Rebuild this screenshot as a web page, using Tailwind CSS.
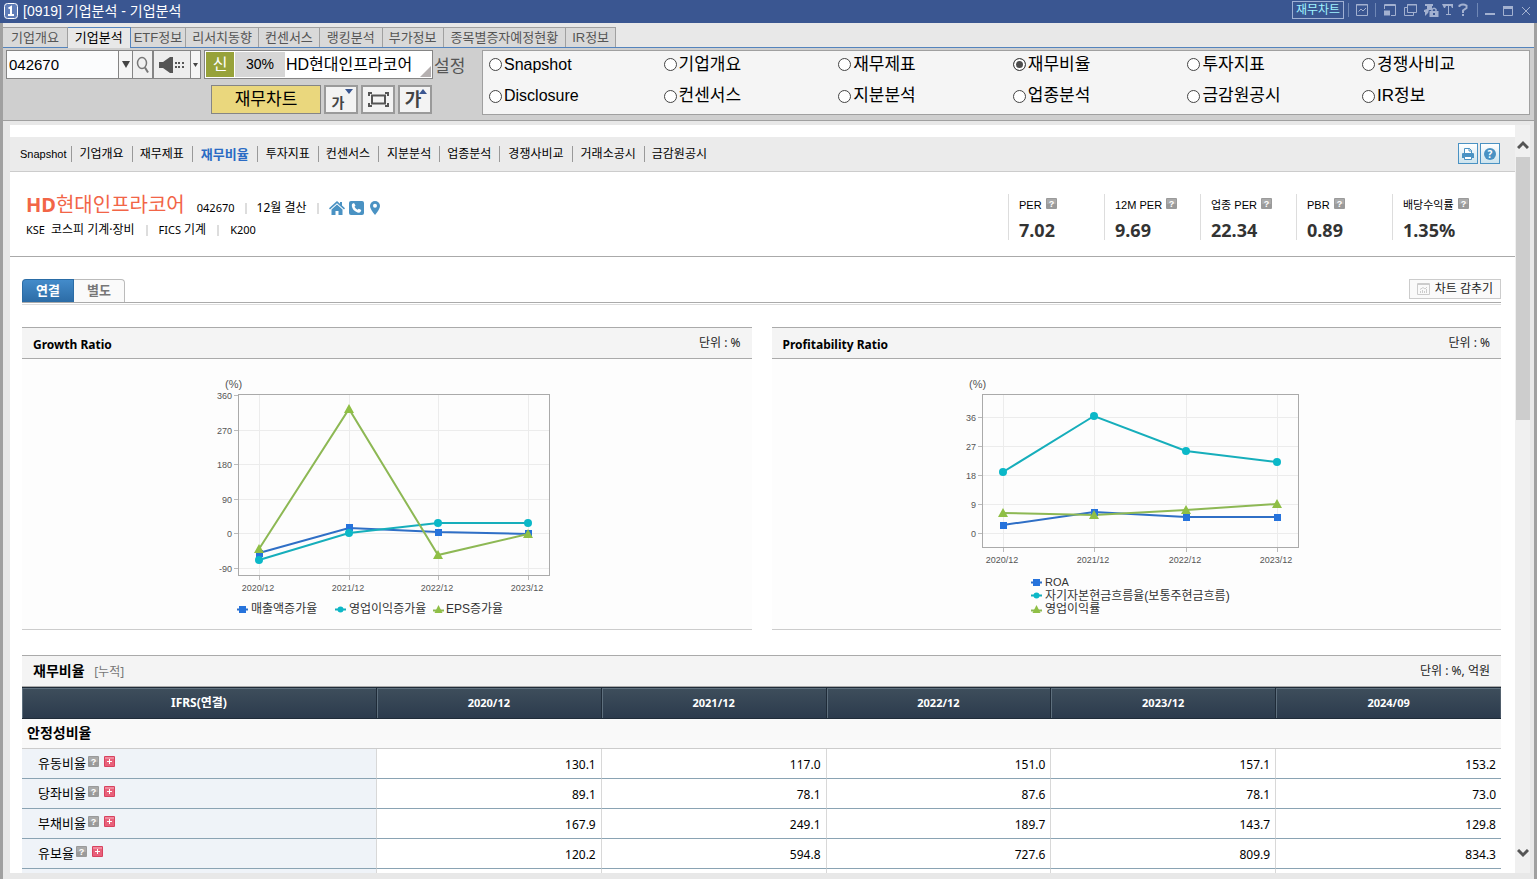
<!DOCTYPE html>
<html lang="ko">
<head>
    <meta charset="UTF-8">
    <meta name="viewport" content="width=device-width, initial-scale=1.0">
    <title>[0919] 기업분석 - 기업분석</title>
    <script src="https://cdn.jsdelivr.net/npm/@tailwindcss/browser@4"></script>
</head>
<body class="h-screen overflow-hidden flex flex-col bg-[#a0a0a0] font-['Liberation_Sans','Noto_Sans_CJK_KR',sans-serif] text-black">

<!-- shared icons -->
<svg class="hidden">
    <symbol id="q" viewBox="0 0 11 11">
        <rect width="11" height="11" rx="1" fill="#9a9a9a"/>
        <rect x="1" y="1" width="9" height="5" fill="#aaa"/>
        <text x="5.500" y="9" text-anchor="middle" font-family="Liberation Sans" font-size="9" font-weight="700" fill="#fff">?</text>
    </symbol>
    <symbol id="plus" viewBox="0 0 11 11">
        <rect width="11" height="11" rx="1" fill="#d8415f"/>
        <rect x="1" y="1" width="9" height="9" fill="#e8607a"/>
        <rect x="1" y="1" width="9" height="2" fill="#f08a9d"/>
        <path d="M3 5.500h5M5.500 3v5" stroke="#fff" stroke-width="1"/>
    </symbol>
</svg>

<!-- Title bar -->
<header class="h-[23px] shrink-0 flex items-center justify-between bg-[#3a5691] pl-1 pr-[5px]">
    <div class="flex items-center gap-[5px] pb-[2px]">
        <svg width="14" height="16" viewBox="0 0 14 16"><rect x=".5" y=".5" width="13" height="15" rx="3" fill="#5f7db8" stroke="#fff"/><path d="M4.500 5.500L7 4v8M4 12h6" fill="none" stroke="#fff" stroke-width="2"/></svg>
        <h1 class="text-[14px] leading-4 text-white">[0919] 기업분석 - 기업분석</h1>
    </div>
    <div class="flex items-center pb-[3px] text-[#a3b1d0]">
        <button class="w-[52px] h-[18px] border border-[#9fb0d4] text-[12px] leading-4 text-[#9ff3ff]">재무차트</button>
        <svg width="188" height="18" viewBox="1344 1 188 18" fill="none" stroke="currentColor">
            <path d="M1348.500 3v14M1375.500 3v14M1477.500 3v14" stroke="#7088b6"/>
            <path d="M1356.500 4.500h11v11h-11zM1356 5h12"/><path d="M1358.500 11.500l2.500-2.500 2 2 3-3"/>
            <path d="M1384.500 9V4.500h11v11H1391M1384 5.500h12"/><path d="M1384 10.500h6v5h-6z" fill="currentColor" stroke="none"/>
            <path d="M1407.500 4.500h9v8h-9zM1407 5h10M1407 7.500h-2.500v8h9V13"/>
            <path d="M1425 4h8v2h-1v4h2v2h-5l-4 4v-4h-1v-2l3-1V6h-2z" fill="currentColor" stroke="none"/>
            <path d="M1429 10.500h10v7h-10z" fill="currentColor" stroke="#3a5691"/>
            <path d="M1432 11V9.500q2-2.500 4 0V11" stroke-width="1.500"/>
            <path d="M1434 13v2" stroke="#3a5691" stroke-width="2"/>
            <path d="M1442 4h11v4h-1l-1-2h-2v8h2v1h-5v-1h2V6h-2l-1 2h-1zM1462 14h2v2h-2zM1485 13h10v2h-10zM1503 6h10v3h-10z" fill="currentColor" stroke="none"/>
            <path d="M1459.500 7V5.500q3.500-2 7 0V8l-3.500 2.500V13" stroke-width="2"/>
            <path d="M1503.500 6.500h9v9h-9z"/><path d="M1522 7l8 8M1530 7l-8 8"/>
        </svg>
    </div>
</header>

<div class="flex-1 min-h-0 mx-[3px] flex flex-col bg-[#e8e8e8]">
    <!-- Screen tabs -->
    <nav class="shrink-0 flex pt-1 border-b border-[#5484bd] text-[13px] leading-[19px] text-[#555]">
        <a href="#" class="border-t border-r border-[#a0a0a0] bg-[#d9d9d9] px-[8px]">기업개요</a>
        <a href="#" class="-mb-px border-t border-r border-[#5484bd] bg-[#e8e8e8] px-[7px] text-black">기업분석</a>
        <a href="#" class="border-t border-r border-[#a0a0a0] bg-[#d9d9d9] px-[3px]">ETF정보</a>
        <a href="#" class="border-t border-r border-[#a0a0a0] bg-[#d9d9d9] px-[6px]">리서치동향</a>
        <a href="#" class="border-t border-r border-[#a0a0a0] bg-[#d9d9d9] px-[6px]">컨센서스</a>
        <a href="#" class="border-t border-r border-[#a0a0a0] bg-[#d9d9d9] px-[7px]">랭킹분석</a>
        <a href="#" class="border-t border-r border-[#a0a0a0] bg-[#d9d9d9] px-[6px]">부가정보</a>
        <a href="#" class="border-t border-r border-[#a0a0a0] bg-[#d9d9d9] px-[7px]">종목별증자예정현황</a>
        <a href="#" class="border-t border-r border-[#a0a0a0] bg-[#d9d9d9] px-[6px]">IR정보</a>
    </nav>

    <!-- Toolbar -->
    <div class="shrink-0 h-[73px] flex items-start bg-[#cfcfcf] border-b border-[#a0a0a0] pt-[2px] pl-[3px] pr-1">
        <div class="w-[476px] shrink-0 flex flex-col gap-[6px]">
            <div class="flex items-center">
                <input type="text" value="042670" aria-label="종목코드" class="w-[113px] h-[29px] border border-[#858585] bg-[#fbfcfd] px-[2px] text-[15px] outline-none">
                <button aria-label="종목 목록" class="w-[14px] h-[29px] border-y border-r border-[#858585] bg-[#f5f5f5] flex items-center justify-center">
                    <svg width="8" height="7" viewBox="0 0 8 7"><path d="M0 0h8L4 7z" fill="#444"/></svg>
                </button>
                <button aria-label="종목 검색" class="w-[20px] h-[29px] border-y border-r border-[#858585] bg-[#f0f0f0] flex items-center justify-center">
                    <svg width="14" height="18" viewBox="0 0 14 18" fill="none" stroke="#777"><ellipse cx="6" cy="7" rx="4.500" ry="5.500" stroke-width="1.500"/><path d="M9 11.500l3 5" stroke-width="2"/></svg>
                </button>
                <button aria-label="음성" class="w-[38px] h-[29px] border border-[#858585] bg-[#ededed] flex items-center justify-center">
                    <svg width="26" height="16" viewBox="0 0 26 16" fill="#555"><path d="M0 5h4l7-5h3v16h-3l-7-5H0zM16 5h2v2h-2zM19 5h2v2h-2zM23 5h2v2h-2zM16 9h2v2h-2zM19 9h2v2h-2zM23 9h2v2h-2z"/></svg>
                </button>
                <button aria-label="음성 메뉴" class="w-[10px] h-[29px] border-y border-r border-[#858585] bg-[#f5f5f5] flex items-center justify-center">
                    <svg width="5" height="4" viewBox="0 0 5 4"><path d="M0 0h5L2.500 4z" fill="#444"/></svg>
                </button>
                <div class="relative ml-[3px] w-[229px] h-[29px] border border-[#858585] bg-white p-px flex text-[16px] leading-[25px]">
                    <span class="w-[28px] bg-[#97a23a] text-white text-center">신</span>
                    <span class="w-[50px] ml-px bg-[#d6d6d6] text-center text-[14px]">30%</span>
                    <span class="pl-px">HD현대인프라코어</span>
                    <svg class="absolute right-px bottom-px" width="11" height="11" viewBox="0 0 11 11"><path d="M11 0v11H0z" fill="#b5b0b0"/></svg>
                </div>
                <span class="text-[17px] leading-5 pl-px pt-1 text-[#555]">설정</span>
            </div>
            <div class="flex gap-[3px] pl-[205px]">
                <button class="w-[110px] h-[29px] border border-[#858585] bg-[#ead77d] text-[17px] leading-6">재무차트</button>
                <button class="relative w-[34px] h-[29px] border-2 border-[#9a9a9a] bg-[#f3f3f3] text-[14px] leading-5 font-bold text-[#444] pt-[6px] pr-[6px] flex justify-center">가
                    <svg class="absolute right-[3px] top-[2px]" width="8" height="5" viewBox="0 0 8 5"><path d="M0 0h8L4 5z" fill="#3a5691"/></svg>
                </button>
                <button aria-label="화면 맞춤" class="w-[34px] h-[29px] border-2 border-[#9a9a9a] bg-[#f3f3f3] flex items-center justify-center">
                    <svg width="21" height="15" viewBox="0 0 21 15" fill="none" stroke="#555"><path d="M4 3.500h13v8H4z" stroke-width="2"/><path d="M1 4V1h3M17 1h3v3M20 11v3h-3M4 14H1v-3" stroke-width="2"/></svg>
                </button>
                <button class="relative w-[34px] h-[29px] border-2 border-[#9a9a9a] bg-[#f3f3f3] text-[18px] leading-6 font-bold text-[#444] pr-1 pt-px flex justify-center">가
                    <svg class="absolute right-[3px] top-[2px]" width="8" height="5" viewBox="0 0 8 5"><path d="M0 5h8L4 0z" fill="#3a5691"/></svg>
                </button>
            </div>
        </div>
        <fieldset class="flex-1 h-[65px] grid grid-cols-[repeat(5,1fr)_167px] grid-rows-[27px_36px] items-center border border-[#a0a0a0] bg-[#f5f5f5] pl-[6px] text-[17px] leading-5">
            <label class="flex items-center gap-[2px] text-[16px]"><input type="radio" name="menu" class="appearance-none size-[13px] rounded-full border border-[#444] bg-white checked:bg-[#4d4d4d] checked:shadow-[inset_0_0_0_2px_#fff]">Snapshot</label>
            <label class="flex items-center gap-[2px]"><input type="radio" name="menu" class="appearance-none size-[13px] rounded-full border border-[#444] bg-white checked:bg-[#4d4d4d] checked:shadow-[inset_0_0_0_2px_#fff]">기업개요</label>
            <label class="flex items-center gap-[2px]"><input type="radio" name="menu" class="appearance-none size-[13px] rounded-full border border-[#444] bg-white checked:bg-[#4d4d4d] checked:shadow-[inset_0_0_0_2px_#fff]">재무제표</label>
            <label class="flex items-center gap-[2px]"><input type="radio" name="menu" checked class="appearance-none size-[13px] rounded-full border border-[#444] bg-white checked:bg-[#4d4d4d] checked:shadow-[inset_0_0_0_2px_#fff]">재무비율</label>
            <label class="flex items-center gap-[2px]"><input type="radio" name="menu" class="appearance-none size-[13px] rounded-full border border-[#444] bg-white checked:bg-[#4d4d4d] checked:shadow-[inset_0_0_0_2px_#fff]">투자지표</label>
            <label class="flex items-center gap-[2px]"><input type="radio" name="menu" class="appearance-none size-[13px] rounded-full border border-[#444] bg-white checked:bg-[#4d4d4d] checked:shadow-[inset_0_0_0_2px_#fff]">경쟁사비교</label>
            <label class="flex items-center gap-[2px] text-[16px]"><input type="radio" name="menu" class="appearance-none size-[13px] rounded-full border border-[#444] bg-white checked:bg-[#4d4d4d] checked:shadow-[inset_0_0_0_2px_#fff]">Disclosure</label>
            <label class="flex items-center gap-[2px]"><input type="radio" name="menu" class="appearance-none size-[13px] rounded-full border border-[#444] bg-white checked:bg-[#4d4d4d] checked:shadow-[inset_0_0_0_2px_#fff]">컨센서스</label>
            <label class="flex items-center gap-[2px]"><input type="radio" name="menu" class="appearance-none size-[13px] rounded-full border border-[#444] bg-white checked:bg-[#4d4d4d] checked:shadow-[inset_0_0_0_2px_#fff]">지분분석</label>
            <label class="flex items-center gap-[2px]"><input type="radio" name="menu" class="appearance-none size-[13px] rounded-full border border-[#444] bg-white checked:bg-[#4d4d4d] checked:shadow-[inset_0_0_0_2px_#fff]">업종분석</label>
            <label class="flex items-center gap-[2px]"><input type="radio" name="menu" class="appearance-none size-[13px] rounded-full border border-[#444] bg-white checked:bg-[#4d4d4d] checked:shadow-[inset_0_0_0_2px_#fff]">금감원공시</label>
            <label class="flex items-center gap-[2px]"><input type="radio" name="menu" class="appearance-none size-[13px] rounded-full border border-[#444] bg-white checked:bg-[#4d4d4d] checked:shadow-[inset_0_0_0_2px_#fff]">IR정보</label>
        </fieldset>
    </div>

    <div class="flex-1 min-h-0 flex pt-1 pb-[6px] pl-[7px] pr-1">
        <main class="flex-1 min-w-0 overflow-hidden bg-white pt-3 font-['Noto_Sans','Noto_Sans_CJK_KR',sans-serif] text-[12px] leading-4">
            <!-- Page nav -->
            <div class="h-[35px] flex items-center justify-between bg-[#ebebeb] border-b border-[#ccc] pl-[10px] pr-[15px]">
                <nav class="flex">
                    <a href="#" class="pr-[5px] font-['Liberation_Sans'] text-[11px]">Snapshot</a>
                    <a href="#" class="border-l border-[#999] pl-[7px] pr-2">기업개요</a>
                    <a href="#" class="border-l border-[#999] pl-[7px] pr-2">재무제표</a>
                    <a href="#" class="border-l border-[#999] px-2 text-[13px] font-bold text-[#2a6bc4]">재무비율</a>
                    <a href="#" class="border-l border-[#999] px-2">투자지표</a>
                    <a href="#" class="border-l border-[#999] pl-[7px] pr-2">컨센서스</a>
                    <a href="#" class="border-l border-[#999] px-2">지분분석</a>
                    <a href="#" class="border-l border-[#999] pl-[7px] pr-2">업종분석</a>
                    <a href="#" class="border-l border-[#999] px-2">경쟁사비교</a>
                    <a href="#" class="border-l border-[#999] px-2">거래소공시</a>
                    <a href="#" class="border-l border-[#999] pl-[7px] pr-2">금감원공시</a>
                </nav>
                <div class="flex gap-[2px] pb-px">
                    <button aria-label="인쇄" class="w-5 h-[21px] border border-[#4a92c3] bg-linear-to-b from-white to-[#cde4ee] flex items-center justify-center">
                        <svg width="14" height="14" viewBox="0 0 14 14"><path d="M3.500 7V1.500h5l2 2V7" fill="#fff" stroke="#4a92c3"/><path d="M8 1v3h3" fill="none" stroke="#4a92c3"/><path d="M1 7q0-1 1-1h10q1 0 1 1v4H1z" fill="#4a92c3"/><path d="M3.500 9.500h7v3h-7z" fill="#fff" stroke="#4a92c3"/></svg>
                    </button>
                    <button aria-label="도움말" class="w-5 h-[21px] border border-[#4a92c3] bg-linear-to-b from-white to-[#cde4ee] flex items-center justify-center">
                        <svg width="12" height="12" viewBox="0 0 12 12"><circle cx="6" cy="6" r="6" fill="#4a92c3"/><text x="6" y="10" text-anchor="middle" font-size="10" font-weight="700" fill="#fff">?</text></svg>
                    </button>
                </div>
            </div>

            <!-- Company summary -->
            <section class="h-[85px] flex justify-between border-b border-[#aaa] pl-[16px] pr-[27px] pt-[22px]">
                <div>
                    <div class="h-[22px] flex items-center">
                        <h2 class="text-[20px] leading-[22px] text-[#f26547]"><span class="font-bold">HD</span>현대인프라코어</h2>
                        <div class="flex items-center pl-3 pt-[6px]">
                            <span class="text-[11px]">042670</span>
                            <span class="w-[2px] h-[11px] bg-[#ddd] mx-[10px]"></span>
                            <span>12월 결산</span>
                            <span class="w-[2px] h-[11px] bg-[#ddd] mx-[10px]"></span>
                            <a href="#" aria-label="홈페이지"><svg width="16" height="14" viewBox="0 0 16 14" fill="#4a92c3"><path d="M8 0l3 2.700V1h2v3.500L16 7.300 15 8.500 8 2.300 1 8.500 0 7.300z"/><path d="M8 3.500l5.500 5V14H9.500v-4h-3v4h-4V8.500z"/></svg></a>
                            <a href="#" aria-label="전화" class="pl-1"><svg width="15" height="14" viewBox="0 0 15 14"><rect width="15" height="14" rx="2" fill="#4a92c3"/><path d="M3 3l2-1 1.500 2.500-1 1.200q1 2 3 3l1.300-1L12.300 9l-.8 2q-1 1-3 .5Q3.500 9.500 2.800 5z" fill="#fff"/></svg></a>
                            <a href="#" aria-label="위치" class="pl-[6px]"><svg width="10" height="14" viewBox="0 0 10 14"><path d="M5 0a5 5 0 0 1 5 5c0 3-5 9-5 9S0 8 0 5a5 5 0 0 1 5-5z" fill="#4a92c3"/><circle cx="5" cy="4.800" r="2" fill="#fff"/></svg></a>
                        </div>
                    </div>
                    <div class="flex items-center pt-[6px]">
                        <span class="text-[11px]">KSE</span>
                        <span class="pl-[6px]">코스피 기계·장비</span>
                        <span class="w-[2px] h-[11px] bg-[#ddd] mx-[11px]"></span>
                        <span class="text-[11px] pr-[3px]">FICS</span><span>기계</span>
                        <span class="w-[2px] h-[11px] bg-[#ddd] mx-[11px]"></span>
                        <span class="text-[11px]">K200</span>
                    </div>
                </div>
                <dl class="h-[45px] grid grid-cols-5">
                    <div class="w-24 border-l border-[#ddd] pl-[10px] pt-[3px]">
                        <dt class="flex gap-1 font-['Liberation_Sans','Noto_Sans_CJK_KR'] text-[11px]">PER <svg class="size-[11px] mt-px"><use href="#q"/></svg></dt>
                        <dd class="text-[18px] leading-5 pt-[7px] font-bold text-[#333]">7.02</dd>
                    </div>
                    <div class="w-24 border-l border-[#ddd] pl-[10px] pt-[3px]">
                        <dt class="flex gap-1 font-['Liberation_Sans','Noto_Sans_CJK_KR'] text-[11px]">12M PER <svg class="size-[11px] mt-px"><use href="#q"/></svg></dt>
                        <dd class="text-[18px] leading-5 pt-[7px] font-bold text-[#333]">9.69</dd>
                    </div>
                    <div class="w-24 border-l border-[#ddd] pl-[10px] pt-[3px]">
                        <dt class="flex gap-1 font-['Liberation_Sans','Noto_Sans_CJK_KR'] text-[11px]">업종 PER <svg class="size-[11px] mt-px"><use href="#q"/></svg></dt>
                        <dd class="text-[18px] leading-5 pt-[7px] font-bold text-[#333]">22.34</dd>
                    </div>
                    <div class="w-24 border-l border-[#ddd] pl-[10px] pt-[3px]">
                        <dt class="flex gap-1 font-['Liberation_Sans','Noto_Sans_CJK_KR'] text-[11px]">PBR <svg class="size-[11px] mt-px"><use href="#q"/></svg></dt>
                        <dd class="text-[18px] leading-5 pt-[7px] font-bold text-[#333]">0.89</dd>
                    </div>
                    <div class="w-24 border-l border-[#ddd] pl-[10px] pt-[3px]">
                        <dt class="flex gap-1 font-['Liberation_Sans','Noto_Sans_CJK_KR'] text-[11px]">배당수익률 <svg class="size-[11px] mt-px"><use href="#q"/></svg></dt>
                        <dd class="text-[18px] leading-5 pt-[7px] font-bold text-[#333]">1.35%</dd>
                    </div>
                </dl>
            </section>

            <div class="pl-3 pr-[14px] pt-[22px]">
                <!-- Consolidated / separate tabs -->
                <div class="flex justify-between border-b border-[#aaa] shadow-[0_1px_0_#fff,0_2px_0_#ddd]">
                    <div class="flex font-bold text-[13px] leading-[18px]">
                        <button class="w-[52px] h-[23px] pb-[3px] rounded-tl border border-b-0 border-[#2a6ca6] bg-linear-to-b from-[#438bca] to-[#2c6ca6] text-white">연결</button>
                        <button class="w-[51px] h-[23px] pb-[3px] rounded-tr border border-b-0 border-l-0 border-[#bbb] bg-[#fafafa] text-[#777]">별도</button>
                    </div>
                    <button class="w-[92px] h-5 border border-[#ccc] bg-[#fafafa] flex items-center justify-center gap-[5px] text-[#222]">
                        <svg width="13" height="12" viewBox="0 0 13 12" fill="none" stroke="#ccc"><path d="M.5.500h12v11H.5zM.5 1.500h12M3.500 10V8M5.500 10V7M7.500 10V8M9.500 10V6M3 6.500l3-2 2 1.500 2-2"/></svg>
                        차트 감추기
                    </button>
                </div>

                <!-- Charts -->
                <div class="grid grid-cols-2 gap-5 pt-6">
                    <section class="border-b border-[#ccc] bg-[#fdfdfd]">
                        <div class="h-8 flex items-center justify-between border-y border-[#aaa] bg-[#f4f4f4] pl-[11px] pr-[11px]">
                            <h3 class="font-bold pt-[3px]">Growth Ratio</h3>
                            <span class="text-[#222]">단위 : %</span>
                        </div>
                        <svg class="mx-auto block font-['Liberation_Sans','Noto_Sans_CJK_KR']" width="370" height="270" viewBox="0 0 370 270">
                            <path d="M37 71.500h310M37 105.500h310M37 140.500h310M37 174.500h310M37 209.500h310M57.500 36v180M147.500 36v180M236.500 36v180M326.500 36v180" stroke="#ececec"/>
                            <path d="M32 36.500h4M32 71.500h4M32 105.500h4M32 140.500h4M32 174.500h4M32 209.500h4M57.500 217v4M147.500 217v4M236.500 217v4M326.500 217v4" stroke="#bbb"/>
                            <rect x="36.500" y="35.500" width="311" height="181" fill="none" stroke="#aaa"/>
                            <g font-size="9" fill="#555">
                                <text x="23" y="29" font-size="11">(%)</text>
                                <g text-anchor="end"><text x="30" y="40">360</text><text x="30" y="75">270</text><text x="30" y="109">180</text><text x="30" y="144">90</text><text x="30" y="178">0</text><text x="30" y="213">-90</text></g>
                                <g text-anchor="middle"><text x="56" y="232">2020/12</text><text x="146" y="232">2021/12</text><text x="235" y="232">2022/12</text><text x="325" y="232">2023/12</text></g>
                            </g>
                            <g fill="none" stroke-width="2">
                                <path d="M57 194L147 169 236 173 326 175" stroke="#2f6fc6"/>
                                <path d="M57 201L147 174 236 164 326 164" stroke="#16aebb"/>
                                <path d="M57 190L147 50 236 196 326 175" stroke="#8db854"/>
                            </g>
                            <path d="M54 191h7v7h-7zM144 165h7v7h-7zM233 170h7v7h-7zM323 171h7v7h-7z" fill="#2673dc"/>
                            <g fill="#0bb8c8"><circle cx="57" cy="201" r="4"/><circle cx="147" cy="174" r="4"/><circle cx="236" cy="164" r="4"/><circle cx="326" cy="164" r="4"/></g>
                            <path d="M57 185l5 9h-10zM147 45l5 9h-10zM236 191l5 9h-10zM326 170l5 9h-10z" fill="#8fbf45"/>
                            <!-- legend -->
                            <g font-size="12" fill="#333">
                                <path d="M35 250.500h11" stroke="#2f6fc6" stroke-width="2"/><path d="M37 247h7v7h-7z" fill="#2673dc"/><text x="49" y="254">매출액증가율</text>
                                <path d="M133 250.500h11" stroke="#16aebb" stroke-width="2"/><circle cx="138.500" cy="250.500" r="3" fill="#0bb8c8"/><text x="147" y="254">영업이익증가율</text>
                                <path d="M231 251.500h11" stroke="#8db854" stroke-width="2"/><path d="M236.500 246l4 8h-8z" fill="#8fbf45"/><text x="244" y="254">EPS증가율</text>
                            </g>
                        </svg>
                    </section>
                    <section class="border-b border-[#ccc] bg-[#fdfdfd]">
                        <div class="h-8 flex items-center justify-between border-y border-[#aaa] bg-[#f4f4f4] pl-[11px] pr-[11px]">
                            <h3 class="font-bold pt-[3px]">Profitability Ratio</h3>
                            <span class="text-[#222]">단위 : %</span>
                        </div>
                        <svg class="mx-auto block font-['Liberation_Sans','Noto_Sans_CJK_KR']" width="370" height="270" viewBox="-1 0 370 270">
                            <path d="M31 58.500h315M31 87.500h315M31 116.500h315M31 145.500h315M31 174.500h315M51.500 36v152M142.500 36v152M234.500 36v152M325.500 36v152" stroke="#ececec"/>
                            <path d="M26 58.500h4M26 87.500h4M26 116.500h4M26 145.500h4M26 174.500h4M51.500 189v4M142.500 189v4M234.500 189v4M325.500 189v4" stroke="#bbb"/>
                            <rect x="30.500" y="35.500" width="316" height="153" fill="none" stroke="#aaa"/>
                            <g font-size="9" fill="#555">
                                <text x="17" y="29" font-size="11">(%)</text>
                                <g text-anchor="end"><text x="24" y="62">36</text><text x="24" y="91">27</text><text x="24" y="120">18</text><text x="24" y="149">9</text><text x="24" y="178">0</text></g>
                                <g text-anchor="middle"><text x="50" y="204">2020/12</text><text x="141" y="204">2021/12</text><text x="233" y="204">2022/12</text><text x="324" y="204">2023/12</text></g>
                            </g>
                            <g fill="none" stroke-width="2">
                                <path d="M51 166L142 153 234 158 325 158" stroke="#2f6fc6"/>
                                <path d="M51 113L142 57 234 92 325 103" stroke="#16aebb"/>
                                <path d="M51 154L142 156 234 151 325 145" stroke="#8db854"/>
                            </g>
                            <path d="M48 163h7v7h-7zM139 150h7v7h-7zM231 155h7v7h-7zM322 155h7v7h-7z" fill="#2673dc"/>
                            <g fill="#0bb8c8"><circle cx="51" cy="113" r="4"/><circle cx="142" cy="57" r="4"/><circle cx="234" cy="92" r="4"/><circle cx="325" cy="103" r="4"/></g>
                            <path d="M51 149l5 9h-10zM142 151l5 9h-10zM234 146l5 9h-10zM325 140l5 9h-10z" fill="#8fbf45"/>
                            <!-- legend -->
                            <g font-size="12" fill="#333">
                                <path d="M79 223.500h11" stroke="#2f6fc6" stroke-width="2"/><path d="M81 220h7v7h-7z" fill="#2673dc"/><text x="93" y="227" font-size="11">ROA</text>
                                <path d="M79 236.500h11" stroke="#16aebb" stroke-width="2"/><circle cx="84.500" cy="236.500" r="3" fill="#0bb8c8"/><text x="93" y="241">자기자본현금흐름율(보통주현금흐름)</text>
                                <path d="M79 251.500h11" stroke="#8db854" stroke-width="2"/><path d="M84.500 246l4 8h-8z" fill="#8fbf45"/><text x="93" y="254">영업이익률</text>
                            </g>
                        </svg>
                    </section>
                </div>

                <!-- Ratio table -->
                <div class="mt-[25px] h-8 flex items-center justify-between border-y border-[#aaa] bg-[#f4f4f4] px-[11px]">
                    <h3 class="text-[14px] font-bold">재무비율 <span class="pl-[6px] text-[12px] font-normal text-[#777]">[누적]</span></h3>
                    <span class="text-[#222]">단위 : %, 억원</span>
                </div>
                <table class="w-full table-fixed border-separate border-spacing-0">
                    <thead class="text-[11px] text-white">
                        <tr class="h-8 bg-linear-to-b from-[#3f4f5c] to-[#2b3a4c]">
                            <th class="w-[24%] border-y border-r border-[#1f2b38] text-[12px] shadow-[inset_1px_1px_0_#5e6f7d]">IFRS(연결)</th>
                            <th class="border-y border-r border-[#1f2b38] shadow-[inset_1px_1px_0_#5e6f7d]">2020/12</th>
                            <th class="border-y border-r border-[#1f2b38] shadow-[inset_1px_1px_0_#5e6f7d]">2021/12</th>
                            <th class="border-y border-r border-[#1f2b38] shadow-[inset_1px_1px_0_#5e6f7d]">2022/12</th>
                            <th class="border-y border-r border-[#1f2b38] shadow-[inset_1px_1px_0_#5e6f7d]">2023/12</th>
                            <th class="border-y border-[#1f2b38] shadow-[inset_1px_1px_0_#5e6f7d]">2024/09</th>
                        </tr>
                    </thead>
                    <tbody id="ratios">
                        <tr class="h-[30px] bg-[#f9f9f9]"><th colspan="6" class="border-b border-[#ccc] pl-[5px] pb-[2px] text-left text-[14px]">안정성비율</th></tr>
                    </tbody>
                </table>
            </div>
        </main>

        <!-- Scrollbar -->
        <div class="w-[15px] shrink-0 flex flex-col bg-[#f0f0f0] pl-px">
            <button aria-label="위로" class="h-8 flex items-end justify-center pb-2"><svg width="12" height="9" viewBox="0 0 12 9"><path d="M1 8l5-5 5 5" fill="none" stroke="#555" stroke-width="3"/></svg></button>
            <div class="flex-1"><div class="h-[38%] bg-[#cdcdcd]"></div></div>
            <button aria-label="아래로" class="h-6 flex items-start justify-center"><svg width="12" height="9" viewBox="0 0 12 9"><path d="M1 1l5 5 5-5" fill="none" stroke="#555" stroke-width="3"/></svg></button>
        </div>
    </div>
</div>

<script>
    const rows = [
        ["유동비율", "130.1", "117.0", "151.0", "157.1", "153.2"],
        ["당좌비율", "89.1", "78.1", "87.6", "78.1", "73.0"],
        ["부채비율", "167.9", "249.1", "189.7", "143.7", "129.8"],
        ["유보율", "120.2", "594.8", "727.6", "809.9", "834.3"],
        ["", "", "", "", "", ""]
    ];
    document.getElementById("ratios").innerHTML += rows.map(([name, ...values]) => `
        <tr class="h-[30px]">
            <th class="border-b border-r border-b-[#8aa3b3] border-r-[#d8d8d8] bg-[#eff3f8] pl-4 pb-[2px] text-left text-[13px] font-normal">
                <div class="flex items-center">${name && `${name}<button aria-label="설명" class="ml-[2px] mb-[2px]"><svg class="block size-[11px]"><use href="#q"/></svg></button><button aria-label="펼치기" class="ml-[5px] mb-[2px]"><svg class="block size-[11px]"><use href="#plus"/></svg></button>`}</div>
            </th>
            ${values.map(v => `<td class="border-b border-r border-b-[#8aa3b3] border-r-[#d8d8d8] pr-[5px] pt-[3px] text-right last:border-r-0">${v}</td>`).join("")}
        </tr>`).join("");
</script>
</body>
</html>
